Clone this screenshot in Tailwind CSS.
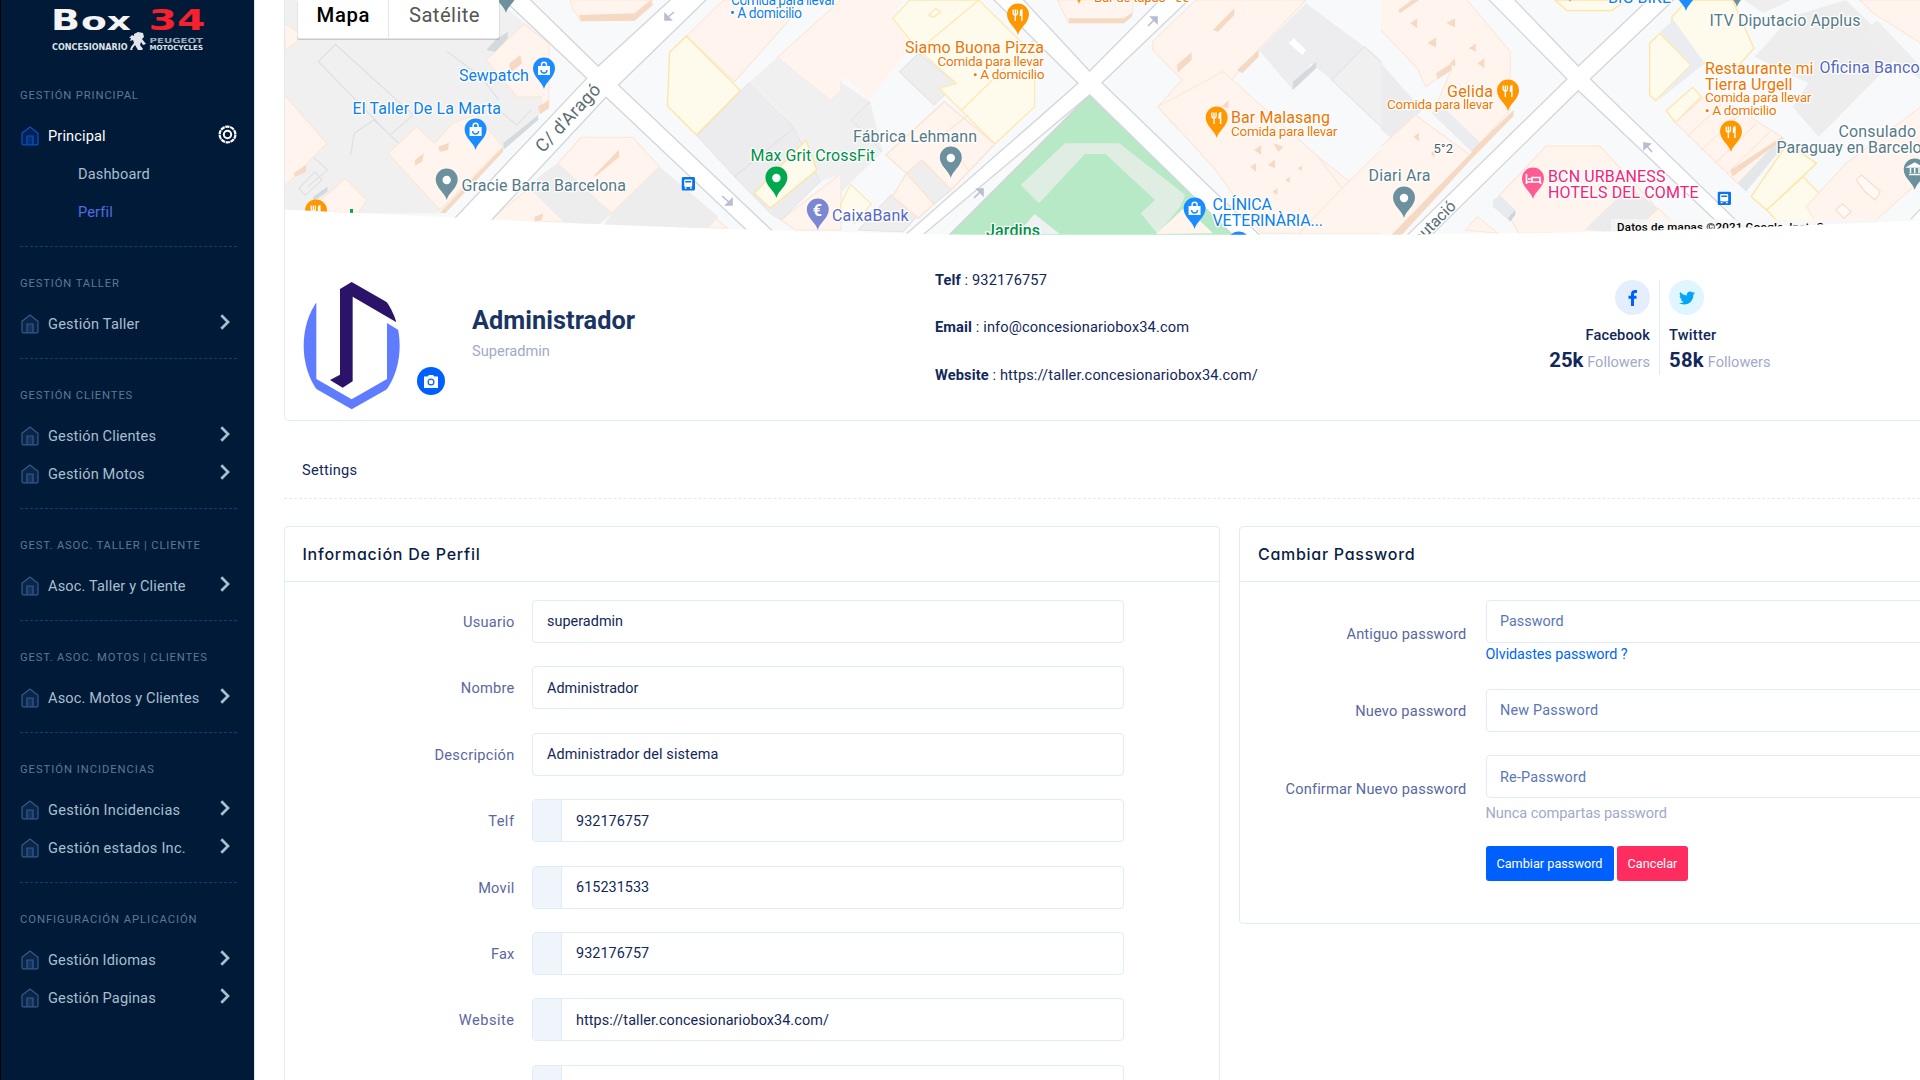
<!DOCTYPE html>
<html lang="es">
<head>
<meta charset="utf-8">
<title>Perfil</title>
<script src="https://cdn.jsdelivr.net/npm/@tailwindcss/browser@4"></script>
</head>
<body class="w-[1920px] h-[1080px] overflow-hidden bg-white font-['Roboto',sans-serif] text-[14.6px] leading-[22px] tracking-[0.13px] text-[#12275b]">
<svg class="hidden">
  <symbol id="house" viewBox="0 0 18 20"><path d="M1 7.2 9 1l8 6.200V17.500a1.300 1.300 0 0 1-1.300 1.300H2.300A1.300 1.300 0 0 1 1 17.500Z" fill="currentColor" fill-opacity=".18" stroke="currentColor" stroke-width="1.200"/><path d="M6 18.500V10h6v8.500" fill="currentColor" fill-opacity=".3" stroke="currentColor" stroke-width="1.200"/></symbol>
  <symbol id="chev" viewBox="0 0 10 16"><path d="M1.300 1.300 8 8l-6.700 6.700" fill="none" stroke="currentColor" stroke-width="2.700"/></symbol>
  <symbol id="pin" viewBox="-12 -12 24 34" overflow="visible"><path d="M0 20C-1.500 13-11 8-11-.5A11 11 0 1 1 11-.5C11 8 1.500 13 0 20Z" fill="currentColor"/></symbol>
  <symbol id="food" viewBox="-12 -12 24 34"><use href="#pin" x="-12" y="-12" width="24" height="34"/><path d="M-4.800-5.500V-2q0 2 2.100 2v6M-2.700-5.500V0M-.6-5.500V-2q0 2-2.100 2" stroke="#fff" stroke-width="1.300" fill="none"/><path d="M4.600-6v12H3.200V1H1.800v-4q0-3 2.800-3Z" fill="#fff"/></symbol>
  <symbol id="shop" viewBox="-12 -12 24 34"><use href="#pin" x="-12" y="-12" width="24" height="34"/><path d="M-6-3H6V6H-6Z" fill="#fff"/><path d="M-2.500-3v-1.200a2.500 2.500 0 0 1 5 0V-3" fill="none" stroke="#fff" stroke-width="1.400"/><path d="M-3 1a3 3 0 0 0 6 0" fill="none" stroke="#1a8cff" stroke-width="1.400"/></symbol>
  <symbol id="dot" viewBox="-12 -12 24 34"><use href="#pin" x="-12" y="-12" width="24" height="34"/><circle r="4.200" fill="#fff"/></symbol>
  <symbol id="bus" viewBox="0 0 14 14"><rect width="13.500" height="13.500" rx="1.500" fill="#0b74e8"/><rect x="2.700" y="2.500" width="8" height="7.500" rx="1" fill="#fff"/><path d="M3.800 4.800h5.900M3.300 10.500h1.700M8.500 10.500h1.700" stroke="#0b74e8" stroke-width="1.600"/><path d="M3.300 11h1.700M8.500 11h1.700" stroke="#fff" stroke-width="1.500"/></symbol>
</svg>
<div class="flex h-full">
  <!-- Sidebar -->
  <aside class="w-[255px] shrink-0 bg-[#001a37] border-l border-l-black border-r border-r-[#dbe6f5] text-[#a9bfd0]">
    <div class="h-[74px] pl-[51px]">
      <svg class="block w-[160px] h-[56px]" viewBox="51 0 160 56">
        <g font-family="DejaVu Sans, sans-serif" font-weight="bold" letter-spacing="0">
          <text x="50" y="30" font-size="28" fill="#f4f4f4" textLength="29" lengthAdjust="spacingAndGlyphs">B</text>
          <text x="80" y="30" font-size="24" fill="#f4f4f4" textLength="50" lengthAdjust="spacingAndGlyphs">ox</text>
          <text x="147.500" y="30" font-size="28" fill="#f6202e" textLength="57" lengthAdjust="spacingAndGlyphs">34</text>
          <text x="51" y="50" font-size="8" fill="#dfe3e8" textLength="75.500" lengthAdjust="spacingAndGlyphs">CONCESIONARIO</text>
          <text x="148.500" y="43" font-size="7" fill="#9fabb8" textLength="53.500" lengthAdjust="spacingAndGlyphs">PEUGEOT</text>
          <text x="148.500" y="50" font-size="7" fill="#dfe3e8" textLength="53.500" lengthAdjust="spacingAndGlyphs">MOTOCYCLES</text>
        </g>
        <path d="M133 34l4-2 5 1 1 4-2 2 4 5-3 1-2-3-1 3 3 4-1 1h-4l-3-5-3 4 1 1h-3l1-3 3-4-1-3-3 1 1-3h-2l3-3 2 1Z" fill="#e3e6ea"/>
      </svg>
    </div>
    <nav class="pl-[19px] pr-[17px]">
      <section class="h-[188px]">
        <h6 class="h-[43px] leading-[43px] text-[11.250px] tracking-[0.850px] text-[#5f7799]">GESTIÓN PRINCIPAL</h6>
        <a class="flex items-center h-[38px] text-white"><svg class="w-[18px] h-5 ml-px mr-[9px] text-[#0a50c8]"><use href="#house"/></svg>Principal<svg class="ml-auto -mt-[4px] w-[19px] h-[19px]" viewBox="0 0 19 19"><circle cx="9.500" cy="9.500" r="7.900" fill="none" stroke="#fff" stroke-width="2.200" stroke-dasharray="4.300 .66"/><circle cx="9.500" cy="9.500" r="3.700" fill="none" stroke="#fff" stroke-width="2"/></svg></a>
        <a class="flex items-center h-[38px] pl-[58px]">Dashboard</a>
        <a class="flex items-center h-[38px] pl-[58px] text-[#506ee4]">Perfil</a>
        <div class="mt-[15px] border-t border-dashed border-[#0a4173]"></div>
      </section>
      <section class="h-[112px]">
        <h6 class="h-[43px] leading-[43px] text-[11.250px] tracking-[0.850px] text-[#5f7799]">GESTIÓN TALLER</h6>
        <a class="flex items-center h-[38px] tracking-[0.200px]"><svg class="w-[18px] h-5 ml-px mr-[9px] text-[#36598d]"><use href="#house"/></svg>Gestión Taller<svg class="ml-auto mr-[7px] -mt-[4px] w-[10px] h-4"><use href="#chev"/></svg></a>
        <div class="mt-[15px] border-t border-dashed border-[#0a4173]"></div>
      </section>
      <section class="h-[150px]">
        <h6 class="h-[43px] leading-[43px] text-[11.250px] tracking-[0.850px] text-[#5f7799]">GESTIÓN CLIENTES</h6>
        <a class="flex items-center h-[38px]"><svg class="w-[18px] h-5 ml-px mr-[9px] text-[#36598d]"><use href="#house"/></svg>Gestión Clientes<svg class="ml-auto mr-[7px] -mt-[4px] w-[10px] h-4"><use href="#chev"/></svg></a>
        <a class="flex items-center h-[38px]"><svg class="w-[18px] h-5 ml-px mr-[9px] text-[#36598d]"><use href="#house"/></svg>Gestión Motos<svg class="ml-auto mr-[7px] -mt-[4px] w-[10px] h-4"><use href="#chev"/></svg></a>
        <div class="mt-[15px] border-t border-dashed border-[#0a4173]"></div>
      </section>
      <section class="h-[112px]">
        <h6 class="h-[43px] leading-[43px] text-[11.250px] tracking-[0.820px] text-[#5f7799]">GEST. ASOC. TALLER | CLIENTE</h6>
        <a class="flex items-center h-[38px]"><svg class="w-[18px] h-5 ml-px mr-[9px] text-[#36598d]"><use href="#house"/></svg>Asoc. Taller y Cliente<svg class="ml-auto mr-[7px] -mt-[4px] w-[10px] h-4"><use href="#chev"/></svg></a>
        <div class="mt-[15px] border-t border-dashed border-[#0a4173]"></div>
      </section>
      <section class="h-[112px]">
        <h6 class="h-[43px] leading-[43px] text-[11.250px] tracking-[0.850px] text-[#5f7799]">GEST. ASOC. MOTOS | CLIENTES</h6>
        <a class="flex items-center h-[38px]"><svg class="w-[18px] h-5 ml-px mr-[9px] text-[#36598d]"><use href="#house"/></svg>Asoc. Motos y Clientes<svg class="ml-auto mr-[7px] -mt-[4px] w-[10px] h-4"><use href="#chev"/></svg></a>
        <div class="mt-[15px] border-t border-dashed border-[#0a4173]"></div>
      </section>
      <section class="h-[150px]">
        <h6 class="h-[43px] leading-[43px] text-[11.250px] tracking-[0.950px] text-[#5f7799]">GESTIÓN INCIDENCIAS</h6>
        <a class="flex items-center h-[38px] tracking-[0.260px]"><svg class="w-[18px] h-5 ml-px mr-[9px] text-[#36598d]"><use href="#house"/></svg>Gestión Incidencias<svg class="ml-auto mr-[7px] -mt-[4px] w-[10px] h-4"><use href="#chev"/></svg></a>
        <a class="flex items-center h-[38px] tracking-[0.260px]"><svg class="w-[18px] h-5 ml-px mr-[9px] text-[#36598d]"><use href="#house"/></svg>Gestión estados Inc.<svg class="ml-auto mr-[7px] -mt-[4px] w-[10px] h-4"><use href="#chev"/></svg></a>
        <div class="mt-[15px] border-t border-dashed border-[#0a4173]"></div>
      </section>
      <section>
        <h6 class="h-[43px] leading-[43px] text-[11.250px] tracking-[0.950px] text-[#5f7799]">CONFIGURACIÓN APLICACIÓN</h6>
        <a class="flex items-center h-[38px]"><svg class="w-[18px] h-5 ml-px mr-[9px] text-[#36598d]"><use href="#house"/></svg>Gestión Idiomas<svg class="ml-auto mr-[7px] -mt-[4px] w-[10px] h-4"><use href="#chev"/></svg></a>
        <a class="flex items-center h-[38px]"><svg class="w-[18px] h-5 ml-px mr-[9px] text-[#36598d]"><use href="#house"/></svg>Gestión Paginas<svg class="ml-auto mr-[7px] -mt-[4px] w-[10px] h-4"><use href="#chev"/></svg></a>
      </section>
    </nav>
  </aside>

  <main class="flex-1 min-w-0 h-full overflow-hidden pl-[28.500px]">
    <!-- Profile card -->
    <div class="h-[421px] border-l border-b border-[#dfebf8] rounded-bl-[5px]">
      <svg class="block w-[1636px] h-[236px]" viewBox="284 0 1636 236">
        <defs><clipPath id="curve"><path d="M284-5V209.500C480 219 700 231 980 234.800H1390C1600 233 1760 228 1920 220V-5Z"/></clipPath></defs>
        <g clip-path="url(#curve)">
          <rect x="284" y="0" width="1636" height="236" fill="#f8f9fb"/>
          <!-- west blocks -->
          <g transform="translate(280 0) scale(.35714 .33333)" stroke-width="1">
            <path d="M0 0H600L690 75 750 130V320L720 345 440 640 0 640Z" fill="#f0f0f0"/>
            <path d="M105 185 152 133 370 345 305 405ZM0 290M128 430 85 465 130 510 75 560M195 465 205 400 260 360 340 440M465 155 560 230 610 300M610 330 660 375 700 330M50 565 95 515 115 540 68 585Z" fill="none" stroke="#dcdfe2" stroke-width="3"/>
            <g fill="#fff5ee" stroke="#fce6d5" stroke-width="3">
              <path d="M575 180 680 72 750 130V320L728 340V290L660 290Z"/><path d="M10 285 128 430 10 560Z"/><path d="M300 460 380 380 430 430 480 370 545 345 622 440 445 630Z"/><path d="M100 610 180 535 240 600 215 640 100 635Z"/><path d="M10 70 65 110 12 150Z"/>
              <path d="M810 0H1040V15L990 60 840 62 815 25Z"/><path d="M1135 108 1240 0H1470L1390 100 1270 245Z"/><path d="M1390 172 1568 0V270L1540 302Z"/>
              <path d="M775 490 840 412H985L1060 500 925 640Z"/><path d="M580 665 700 560 800 665Z"/><path d="M1080 680 1190 630 1250 685Z"/><path d="M1400 660 1568 520V690H1440Z"/>
            </g>
            <path d="M735 520 775 490 925 640 890 675H800L690 560ZM925 640 1060 500 1225 650 1200 682H900Z" fill="#ededed"/>
            <path d="M1540 302 1572 270V520L1510 545 1436 385 1400 340Z" fill="#f0f0f1"/>
            <path d="M1165 408 1310 248 1436 382 1270 530ZM1270 530 1436 385 1510 545 1400 660 1370 640Z" fill="#ececee" stroke="#dcdfe2" stroke-width="2"/>
            <path d="M1390 172 1540 302 1440 380 1310 248Z" fill="#f0f0f0"/>
            <path d="M1088 157 1135 108 1286 272 1163 405 1082 318ZM1325 580 1470 420 1500 510 1370 625Z" fill="#fffbec" stroke="#fde5a5" stroke-width="4"/>
            <path d="M445 638 622 440V455L460 640ZM640 190 670 165 675 190 640 220ZM878 525 945 450 948 470 880 530ZM835 45 990 40 1035 0 1040 15 990 62 840 64ZM440 440 470 428 468 450 445 455ZM375 480 400 460 395 485 375 497ZM710 650 735 640 730 660 710 665ZM720 320 750 300V325L725 342ZM35 520 70 495V515L40 530Z" fill="#f6d9c3"/>
            <path d="M622 430 720 345V360L625 448ZM575 150 600 120 635 95V115L600 155ZM90 590 130 560 130 575 90 605Z" fill="#d3dadd"/>
          </g>
          <!-- central blocks -->
          <g transform="translate(840 0) scale(.34439 .33333)">
            <path d="M-3 0H180L150 50 190 100V160L80 300 15 230-3 245Z" fill="#fff5ee"/>
            <path d="M-3 245 85 305 30 360 120 455-3 580Z" fill="#efeff0"/>
            <path d="M85 305 30 360 120 455M170 215 225 160 335 250 270 315ZM190 520 235 480 320 570 270 612ZM50 690 145 585 220 650 180 695Z" fill="#eeeeef" stroke="#e2e4e6" stroke-width="3"/>
            <path d="M150 55 200 0H400L562 165V320L447 432 285 265 335 250 225 150Z" fill="#fffbec" stroke="#fde9b4" stroke-width="4"/>
            <path d="M255 45 275 25 290 35 268 52ZM250 130 400 0M350 330 560 120" fill="none" stroke="#fde9b4" stroke-width="4"/>
            <path d="M130 465 300 305 447 432 320 570 235 480 190 520 270 612 225 655 150 590 190 520Z" fill="#fff5ee" stroke="#fce4d0" stroke-width="4"/>
            <path d="M300 400 370 345M320 440 370 510" fill="none" stroke="#fce4d0" stroke-width="3"/>
            <path d="M0 610 28 553 88 612 40 670 0 640Z" fill="#fffbec" stroke="#fde5a5" stroke-width="3"/>
            <path d="M628 0H850L845 45 820 68H660Z" fill="#fff5ee" stroke="#fce6d5" stroke-width="3"/>
            <path d="M905 125 1030 0H1350L1210 150 1110 270 980 390 920 320 990 240 905 150Z" fill="#fff5ee" stroke="#fce6d5" stroke-width="3"/>
            <path d="M920 320 1110 215 1385 470 1568 620V700H1220L1080 500Z" fill="#fff5ee" stroke="#fce6d5" stroke-width="3"/>
            <path d="M1385 470 1455 565 1572 450V700H1330L1250 610Z" fill="#fff5ee"/><path d="M1385 470 1455 565 1568 450M1455 565 1330 700" fill="none" stroke="#fce6d5" stroke-width="3"/>
            <path d="M1213 150 1350 10 1520 140 1425 240 1365 190 1312 270Z" fill="#ededef"/><path d="M1425 240 1520 140 1572 185V380Z" fill="#f0f0f0"/>
            <path d="M1568 380 1425 240 1520 140 1568 185" fill="none" stroke="#e0e2e4" stroke-width="3"/>
            <path d="M1300 130 1315 115 1350 150 1340 165Z" fill="#fff"/><path d="M1312 245 1380 185V205L1312 270Z" fill="#d5d9de"/>
            <path d="M975 195 1018 157V180L978 218ZM1080 90 1142 25V45L1095 95ZM1150 210 1213 150V170L1165 220ZM660 55H820L845 38V50L822 70H662ZM1105 320 1125 300V325ZM1200 450 1220 435V465ZM1240 495 1260 478V505ZM1188 500 1205 490V515ZM1290 540 1303 530V548ZM1325 505 1338 497V512ZM1253 575 1267 565V585ZM1255 430 1285 440 1270 455Z" fill="#f6d9c3"/>
            <path d="M722 285 1140 702 1100 720H300Z" fill="#b7e9c7" stroke="#cfd6d4" stroke-width="5"/>
            <path d="M522 555 650 430H808L1000 585 985 620 920 702 870 640 912 600 768 462H708L575 610Z" fill="#e0ede3"/>
            <path d="M530 680 562 642 635 702H530Z" fill="#eef1f2"/><path d="M915 702 1000 620 1080 700Z" fill="#fff5ee"/>
          </g>
          <!-- east blocks -->
          <g transform="translate(1380 0) scale(.34439 .33333)">
            <path d="M0 0H250L375 155V330L265 455 150 340 205 205 130 260 105 205 0 90Z" fill="#fff5ee"/>
            <path d="M250 0 375 155V330L265 455 150 340 205 205 130 260 105 205 0 90" fill="none" stroke="#fce6d5" stroke-width="3"/>
            <path d="M0 190 120 330 30 415 0 390Z" fill="#ececee"/><path d="M150 340 265 455V475L290 430 180 320Z" fill="#ebecef"/>
            <path d="M-2 440 100 345 265 470 40 700H-2Z" fill="#fff5ee"/><path d="M0 440 100 345 265 470" fill="none" stroke="#fce6d5" stroke-width="3"/>
            <path d="M160 220 205 190V210L165 238ZM85 70 105 55V85ZM190 70 215 55V82ZM135 130 160 112V142ZM255 145 275 130V155ZM200 190 215 175V200ZM280 190 300 175V205ZM50 30 90 0H110L55 40ZM95 410 110 398V425ZM265 450 385 330V348L265 475ZM30 705 265 455V475L60 705ZM145 460 155 450V475Z" fill="#f6d9c3"/>
            <path d="M505 0H715L670 32H540Z" fill="#fffbec" stroke="#fde5a5" stroke-width="4"/>
            <path d="M780 130 810 100 900 195 797 302 780 285ZM845 50 890 0H1020L1083 145 1030 205 950 200 845 90ZM828 332 905 262 930 290 855 368ZM1075 590 1180 430 1265 490 1120 630ZM1120 630 1225 530 1310 620 1240 695H1180Z" fill="#fffbec" stroke="#fde5a5" stroke-width="4"/>
            <path d="M810 95 850 60 940 190 800 305 900 195Z" fill="#ebecef"/><path d="M855 368 955 275 1170 415 1035 550Z" fill="#fff5ee" stroke="#fce6d5" stroke-width="3"/>
            <path d="M890 410 990 310M930 450 1040 345M970 490 1090 370M1005 520 1130 395" stroke="#fce6d5" stroke-width="3"/>
            <path d="M1085 170 1190 50 1350 0 1510 160 1300 380 1270 410 1195 320 1240 250Z" fill="#ededed"/><path d="M1055 0H1190L1110 40ZM1400 100 1440 60 1568 200V240L1510 200Z" fill="#eeeeef"/>
            <path d="M1390 0H1568V130L1430 40Z" fill="#fff5ee" stroke="#fce6d5" stroke-width="3"/>
            <path d="M1235 620 1350 490 1568 320V540L1400 695H1280Z" fill="#fff5ee" stroke="#fce6d5" stroke-width="3"/>
            <path d="M1035 550 1160 415 1175 430 1060 575Z" fill="#e4e7ea"/><path d="M1015 510 1165 410V420L1020 530Z" fill="#f6d9c3"/>
            <path d="M340 590 480 438H635L790 610 640 700H400Z" fill="#fff5ee" stroke="#fde3cc" stroke-width="3"/>
            <path d="M590 690 720 560 805 625 730 700Z" fill="#ebebec"/><path d="M325 600 345 585 390 630 370 660 325 620Z" fill="#e8ebee"/><path d="M368 655 390 630V645L375 665Z" fill="#cfd5dc"/>
            <path d="M245 690 280 650 340 700ZM730 700 805 625 870 690Z" fill="#fff5ee" stroke="#fce6d5" stroke-width="3"/>
            <path d="M1380 540 1395 525 1450 575 1435 600 1405 575ZM1320 630 1340 612 1365 635 1345 655Z" fill="#fffaf5" stroke="#f6d9c3" stroke-width="3"/>
            <path d="M1500 700 1600 590V700Z" fill="#fff" stroke="#d5d9dc" stroke-width="4"/>
          </g>
          <!-- streets -->
          <g fill="#fff" stroke="#d3d7da" stroke-width="4">
            <path transform="translate(280 0) scale(.35714 .33333)" d="M605-20 856 235 460 685 555 700 910 292 1320 707 1390 707 945 255 1209-20H1110L888 198 680-20Z"/>
            <path transform="translate(840 0) scale(.34439 .33333)" d="M425-20 688 250 170 720H220L722 285 1150 717 1227 717 758 248 1030-20H945L722 213 512-20Z"/>
            <path transform="translate(1380 0) scale(.34439 .33333)" d="M295-20 540 237 60 722H130L573 272 1010 700H1070L608 237 870-20H795L573 198 370-20Z"/>
          </g>
          <g fill="#b9bdd3" stroke="#b9bdd3" stroke-width="1.600">
            <path d="M673 12 666 18M664 20v-6l6 6Z"/><path d="M721 196l8 7M731 205v-6l-6 6Z"/><path d="M1147 26l7-7M1156 17v6l-6-6Z"/><path d="M973 198l7-7M982 189v6l-6-6Z"/><path d="M1651 152l-6-7M1643 143v6l6-5Z"/>
          </g>
          <!-- points of interest -->
          <g>
            <use href="#dot" x="493" y="-19" width="24" height="34" color="#6b919e"/><use href="#shop" x="531" y="57" width="24" height="34" color="#1a8cff"/><use href="#shop" x="462.600" y="118" width="24" height="34" color="#1a8cff"/><use href="#dot" x="433.700" y="168" width="24" height="34" color="#6b919e"/><use href="#dot" x="763.400" y="166" width="24" height="34" color="#00a94f"/><use href="#pin" x="804.800" y="198" width="24" height="34" color="#7b87d3"/><use href="#food" x="303" y="199" width="24" height="34" color="#ff9800"/>
            <use href="#food" x="1005" y="3" width="24" height="34" color="#ff9800"/><use href="#dot" x="937.800" y="146" width="24" height="34" color="#6b919e"/><use href="#food" x="1203.700" y="106" width="24" height="34" color="#ff9800"/><use href="#shop" x="1181.600" y="197" width="24" height="34" color="#1a8cff"/><use href="#shop" x="1225.700" y="231" width="24" height="34" color="#1a8cff"/><use href="#pin" x="1066" y="-28" width="24" height="34" color="#ff9800"/>
            <use href="#food" x="1495" y="79" width="24" height="34" color="#ff9800"/><use href="#dot" x="1391" y="186" width="24" height="34" color="#6b919e"/><use href="#pin" x="1520" y="167" width="24" height="34" color="#ff5b93"/><use href="#food" x="1718" y="120" width="24" height="34" color="#ff9800"/><use href="#pin" x="1901.700" y="158" width="24" height="34" color="#6b919e"/><use href="#pin" x="1673" y="-21" width="24" height="34" color="#1a8cff"/><use href="#pin" x="1724" y="-25" width="24" height="34" color="#6b919e"/><use href="#pin" x="1557" y="-30" width="24" height="34" color="#1a8cff"/>
            <use href="#bus" x="680.500" y="177" width="14" height="14"/><use href="#bus" x="1716.500" y="191.500" width="14" height="14"/>
            <path d="M1525.500 174v10M1525.500 182h14v2M1539 182v-4.500h-8v4M1527 179h3" stroke="#fff" stroke-width="1.600" fill="none"/>
            <path d="M1907 167l6.700-4 6.700 4ZM1908 174.500h12M1909.500 168v5M1913.700 168v5M1918 168v5" stroke="#fff" stroke-width="1.500" fill="#fff"/>
            <rect x="349" y="209" width="3" height="4" fill="#00a94f"/>
          </g>
          <g font-family="Roboto, sans-serif" font-size="16" letter-spacing="0" stroke="#fff" stroke-width="2.500" stroke-linejoin="round" paint-order="stroke">
            <g fill="#0b80ee">
              <text x="457.900" y="80.600" textLength="70">Sewpatch</text><text x="351.500" y="114" textLength="148.500">El Taller De La Marta</text>
              <text x="1211.500" y="209.700" textLength="59.500">CLÍNICA</text><text x="1211.500" y="226" textLength="110.500">VETERINÀRIA...</text><text x="1607" y="3" textLength="63">BIG BIKE</text>
              <text x="730" y="5" font-size="14" textLength="105">Comida para llevar</text><text x="729" y="17.700" font-size="14" textLength="72">• A domicilio</text>
            </g>
            <g fill="#567a88">
              <text x="460.500" y="191.300" textLength="164.500">Gracie Barra Barcelona</text><text x="852" y="141.500" textLength="124">Fábrica Lehmann</text><text x="1367.500" y="181" textLength="62">Diari Ara</text><text x="1708.500" y="26" textLength="151">ITV Diputacio Applus</text><text x="1837.500" y="137" textLength="77.500">Consulado</text><text x="1775.500" y="153.300" textLength="154">Paraguay en Barcelon</text>
              <text x="1432.500" y="152.700" font-size="13" fill="#4b5f68">5°2</text>
              <text transform="translate(542 153.500) rotate(-47)" font-size="18" fill="#5a6d75" textLength="86">C/ d'Aragó</text>
              <text transform="translate(1456 207) rotate(-45)" font-size="16" fill="#5a6d75" text-anchor="end">Diputació</text>
            </g>
            <g fill="#009245"><text x="749.600" y="161.300" textLength="124.500">Max Grit CrossFit</text><text x="985" y="235.500" font-weight="500" textLength="54">Jardins</text></g>
            <g fill="#5567c4"><text x="831" y="221.300" textLength="76.500">CaixaBank</text><text x="1818.500" y="72.500" textLength="100">Oficina Banco</text></g>
            <g fill="#ef7500">
              <text x="904" y="52.600" textLength="139">Siamo Buona Pizza</text><text x="1230" y="123.300" textLength="99">Bar Malasang</text><text x="1446" y="96.700" textLength="46">Gelida</text><text x="1704" y="73.500" textLength="108.500">Restaurante mi</text><text x="1704" y="89.500" textLength="87.500">Tierra Urgell</text>
              <g font-size="13.700"><text x="936.500" y="66" textLength="106.500">Comida para llevar</text><text x="972" y="79.300" textLength="71.500">• A domicilio</text><text x="1230" y="135.700" textLength="106.500">Comida para llevar</text><text x="1386" y="109" textLength="106.500">Comida para llevar</text><text x="1704" y="102.300" textLength="106.500">Comida para llevar</text><text x="1704" y="115" textLength="71.500">• A domicilio</text><text x="1093" y="2" textLength="95">Bar de tapas · €€</text></g>
            </g>
            <g fill="#f0257a"><text x="1547" y="181.700" textLength="117.500">BCN URBANESS</text><text x="1547" y="198.300" textLength="150.500">HOTELS DEL COMTE</text></g>
          </g>
          <text x="811.800" y="215.500" font-family="Roboto, sans-serif" font-size="16" font-weight="bold" fill="#fff">€</text>
          <rect x="1610" y="219" width="310" height="17" fill="#f7f7f7" fill-opacity=".75"/>
          <text x="1616" y="230.500" font-family="Roboto, sans-serif" font-size="11.500" letter-spacing="0" font-weight="500" fill="#000" textLength="284">Datos de mapas ©2021 Google, Inst. Geogr. Nacional</text>
          <!-- map type switch -->
          <rect x="296" y="1" width="202.500" height="39" fill="#000" fill-opacity=".16" rx="2"/><rect x="296.500" y="-5" width="201.500" height="43.500" fill="#fff" rx="2"/><rect x="387" y="0" width="1" height="38.500" fill="#e6e6e6"/>
          <g font-family="Roboto, sans-serif" font-size="20.250" letter-spacing="0"><text x="315.500" y="22.300" font-weight="500" fill="#000" textLength="53">Mapa</text><text x="408" y="22.300" fill="#565656" textLength="70.500">Satélite</text></g>
        </g>
      </svg>
      <div class="flex pt-11 pl-[18px]">
        <div class="flex items-end w-[169.500px] h-[131px]">
          <svg class="block w-[98px] h-[130px] mb-0" viewBox="67 94 294 390">
            <defs><clipPath id="oval"><ellipse cx="213" cy="288" rx="144" ry="192"/></clipPath></defs>
            <g clip-path="url(#oval)"><path d="M60 160H107V388L213 449 319 388V220L365 248V390L319 419 213 479 107 418 60 390Z" fill="#5f7bff"/><path d="M178 118 213 97 319 158 370 190 346 217 216 141V395L186 414 148 391 178 375Z" fill="#2b1369"/></g>
          </svg>
          <span class="flex items-center justify-center w-7 h-7 ml-4 mb-[16px] rounded-full bg-[#0060ff]"><svg class="w-[14px] h-[13px]" viewBox="0 0 14 13"><path d="M0 1.500h3.500L5 0h4l1.500 1.500H14V13H0Z" fill="#fff"/><circle cx="7" cy="7" r="2.900" fill="none" stroke="#0060ff" stroke-width="1.200"/></svg></span>
        </div>
        <div class="w-[463px] pt-[25px]">
          <h5 class="text-[25.300px] leading-[32px] tracking-[0.050px] font-bold text-[#1a3464]">Administrador</h5>
          <p class="mt-[3px] text-[#a1aac8] tracking-normal">Superadmin</p>
        </div>
        <ul class="w-[614px] flex flex-col gap-[25.300px] -mt-[11px]">
          <li><b class="font-bold">Telf</b> : 932176757</li>
          <li><b class="font-bold">Email</b> : info@concesionariobox34.com</li>
          <li><b class="font-bold">Website</b> : https://taller.concesionariobox34.com/</li>
        </ul>
        <div class="flex h-[95px]">
          <div class="w-[111px] pr-[9px] flex flex-col items-end border-r border-[#dfebf8]">
            <span class="flex items-center justify-center w-[35px] h-[35px] rounded-full bg-[#e5eefe]"><svg class="w-[10px] h-4" viewBox="0 0 10 16"><path d="M9 1.500H7.200Q4.500 1.500 4.500 4.200V16M.5 7.300h8" fill="none" stroke="#0060ff" stroke-width="3"/></svg></span>
            <p class="mt-[9px] font-medium">Facebook</p>
            <p class="mt-[3px] whitespace-nowrap leading-[22px]"><span class="text-[20.250px] font-bold tracking-normal">25k</span> <span class="text-[#a1aac8] tracking-[0px]">Followers</span></p>
          </div>
          <div class="pl-[9px]">
            <span class="flex items-center justify-center w-[35px] h-[35px] rounded-full bg-[#e0f6fe]"><svg class="w-4 h-4" viewBox="0 0 512 512"><path fill="#03a5f5" d="M459.370 151.716c.325 4.548.325 9.097.325 13.645 0 138.720-105.583 298.558-298.558 298.558-59.452 0-114.680-17.219-161.137-47.106 8.447.974 16.568 1.299 25.340 1.299 49.055 0 94.213-16.568 130.274-44.832-46.132-.975-84.792-31.188-98.112-72.772 6.498.974 12.995 1.624 19.818 1.624 9.421 0 18.843-1.300 27.614-3.573-48.081-9.747-84.143-51.980-84.143-102.985v-1.299c13.969 7.797 30.214 12.670 47.431 13.319-28.264-18.843-46.781-51.005-46.781-87.391 0-19.492 5.197-37.360 14.294-52.954 51.655 63.675 129.300 105.258 216.365 109.807-1.624-7.797-2.599-15.918-2.599-24.040 0-57.828 46.782-104.934 104.934-104.934 30.213 0 57.502 12.670 76.670 33.137 23.715-4.548 46.456-13.320 66.599-25.340-7.798 24.366-24.366 44.833-46.132 57.827 21.117-2.273 41.584-8.122 60.426-16.243-14.292 20.791-32.161 39.308-52.628 54.253z"/></svg></span>
            <p class="mt-[9px] font-medium tracking-[0.250px]">Twitter</p>
            <p class="mt-[3px] whitespace-nowrap leading-[22px]"><span class="text-[20.250px] font-bold tracking-[0.300px]">58k</span> <span class="text-[#a1aac8] tracking-[0px]">Followers</span></p>
          </div>
        </div>
      </div>
    </div>

    <div class="h-[77.500px] pt-[37.500px] pl-[18.500px] border-b border-dashed border-[#dfebf8] tracking-[0.250px]">Settings</div>

    <div class="flex items-start gap-[18.500px] mt-[27.500px]">
      <!-- Profile form -->
      <section class="w-[936.500px] shrink-0 h-[600px] border border-[#dfebf8] rounded-[4px]">
        <h4 class="h-[55px] pl-[18px] pt-[3px] leading-[48px] border-b border-[#dfebf8] font-['Inter',sans-serif] [font-feature-settings:'cv11'] font-medium text-[16px] tracking-[0.760px] text-[#0a1c44]">Información De Perfil</h4>
        <div class="flex flex-col gap-[23.400px] pt-[18px] text-[14.400px] tracking-[0.040px]">
          <div class="flex items-center h-[43px]"><label class="w-[230px] mr-[17.500px] pt-px text-right text-[14.600px] tracking-[0.250px] text-[#5a67a1]">Usuario</label><div class="w-[592px] h-full px-[14px] pt-px flex items-center border border-[#dfebf8] rounded-[4px]">superadmin</div></div>
          <div class="flex items-center h-[43px]"><label class="w-[230px] mr-[17.500px] pt-px text-right text-[14.600px] tracking-[0.250px] text-[#5a67a1]">Nombre</label><div class="w-[592px] h-full px-[14px] pt-[2px] flex items-center border border-[#dfebf8] rounded-[4px]">Administrador</div></div>
          <div class="flex items-center h-[43px]"><label class="w-[230px] mr-[17.500px] pt-px text-right text-[14.600px] tracking-[0.300px] text-[#5a67a1]">Descripción</label><div class="w-[592px] h-full px-[14px] pt-[2px] flex items-center border border-[#dfebf8] rounded-[4px] tracking-[0.120px]">Administrador del sistema</div></div>
          <div class="flex items-center h-[43px]"><label class="w-[230px] mr-[17.500px] pt-px text-right text-[14.600px] tracking-[0.500px] text-[#5a67a1]">Telf</label><div class="w-[592px] h-full flex items-center border border-[#dfebf8] rounded-[4px]"><span class="w-[29px] mr-[14px] h-full bg-[#eff5fa] border-r border-[#dfebf8]"></span><span class="pt-[2px]">932176757</span></div></div>
          <div class="flex items-center h-[43px]"><label class="w-[230px] mr-[17.500px] pt-px text-right text-[14.600px] tracking-[0.250px] text-[#5a67a1]">Movil</label><div class="w-[592px] h-full flex items-center border border-[#dfebf8] rounded-[4px]"><span class="w-[29px] mr-[14px] h-full bg-[#eff5fa] border-r border-[#dfebf8]"></span><span class="pt-[2px]">615231533</span></div></div>
          <div class="flex items-center h-[43px]"><label class="w-[230px] mr-[17.500px] pt-px text-right text-[14.600px] tracking-[0.150px] text-[#5a67a1]">Fax</label><div class="w-[592px] h-full flex items-center border border-[#dfebf8] rounded-[4px]"><span class="w-[29px] mr-[14px] h-full bg-[#eff5fa] border-r border-[#dfebf8]"></span><span class="pt-[2px]">932176757</span></div></div>
          <div class="flex items-center h-[43px]"><label class="w-[230px] mr-[17.500px] pt-px text-right text-[14.600px] tracking-[0.500px] text-[#5a67a1]">Website</label><div class="w-[592px] h-full flex items-center border border-[#dfebf8] rounded-[4px]"><span class="w-[29px] mr-[14px] h-full bg-[#eff5fa] border-r border-[#dfebf8]"></span><span class="pt-[2px] tracking-[0.090px]">https://taller.concesionariobox34.com/</span></div></div>
          <div class="flex items-center h-[43px]"><div class="ml-[247.500px] w-[592px] h-full flex items-center border border-[#dfebf8] rounded-[4px]"><span class="w-[29px] h-full bg-[#eff5fa] border-r border-[#dfebf8]"></span></div></div>
        </div>
      </section>
      <!-- Password form -->
      <section class="w-[937px] shrink-0 h-[398px] border border-[#dfebf8] rounded-[4px]">
        <h4 class="h-[55px] pl-[18.500px] pt-[3px] leading-[48px] border-b border-[#dfebf8] font-['Inter',sans-serif] [font-feature-settings:'cv11'] font-medium text-[16px] tracking-[0.720px] text-[#0a1c44]">Cambiar Password</h4>
        <div class="pt-[18px] text-[14.400px] tracking-normal text-[#5a77b5]">
          <div class="flex items-center h-[66px]"><label class="w-[227px] mr-[19px] pt-px text-right text-[14.600px] tracking-[0.150px] text-[#5a67a1]">Antiguo password</label><div class="w-[600px]"><div class="h-[43px] px-[13.500px] pt-px flex items-center border border-[#dfebf8] rounded-[4px]">Password</div><a class="block h-[23px] leading-[24px] tracking-[-0.080px] text-[#0066f5]">Olvidastes password ?</a></div></div>
          <div class="flex items-center h-[43px] mt-[22.500px]"><label class="w-[227px] mr-[19px] pt-px text-right text-[14.600px] tracking-[0.200px] text-[#5a67a1]">Nuevo password</label><div class="w-[600px] h-full px-[13.500px] pt-[2px] flex items-center border border-[#dfebf8] rounded-[4px] tracking-[0.200px]">New Password</div></div>
          <div class="flex items-center h-[67px] mt-[23.500px]"><label class="w-[227px] mr-[19px] pt-px text-right text-[14.600px] tracking-[0.150px] text-[#5a67a1]">Confirmar Nuevo password</label><div class="w-[600px]"><div class="h-[43px] px-[13.500px] pt-[2px] flex items-center border border-[#dfebf8] rounded-[4px] tracking-[0.200px]">Re-Password</div><p class="h-6 pt-[4px] leading-[22px] text-[14.600px] tracking-[-0.080px] text-[#a1aac8]">Nunca compartas password</p></div></div>
          <div class="flex gap-[3.500px] mt-6 ml-[246px] text-[12.700px] text-white"><span class="h-[35px] w-[128px] flex items-center justify-center rounded-[3px] bg-[#0060ff]">Cambiar password</span><span class="h-[35px] w-[71px] flex items-center justify-center rounded-[3px] bg-[#ff2c5f]">Cancelar</span></div>
        </div>
      </section>
    </div>
  </main>
</div>
</body>
</html>
